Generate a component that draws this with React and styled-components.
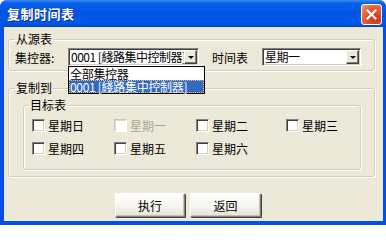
import React from "react";
import styled, { createGlobalStyle } from "styled-components";

const GlobalStyle = createGlobalStyle`
  html, body {
    margin: 0;
    padding: 0;
    background: #ffffff;
  }
  body {
    font-family: "Noto Sans CJK SC", "Liberation Sans", sans-serif;
    font-size: 12px;
  }
`;

const Window = styled.div`
  width: 386px;
  height: 225px;
  display: flex;
  flex-direction: column;
  background: #0450e6;
  border-radius: 7px 7px 0 0;
  overflow: hidden;
  box-sizing: border-box;
`;

const TitleBar = styled.div`
  height: 27px;
  flex: none;
  display: flex;
  align-items: center;
  justify-content: space-between;
  padding: 0 4px 0 7px;
  background: linear-gradient(
    to bottom,
    #3d8bf5 0%,
    #0a5fe8 12%,
    #0054e3 45%,
    #0159ec 85%,
    #0047d0 100%
  );
`;

const Title = styled.span`
  color: #ffffff;
  font-weight: bold;
  font-size: 13px;
  letter-spacing: 0.5px;
  text-shadow: 1px 1px 0 #0a2a8a;
`;

const CloseButton = styled.div`
  width: 19px;
  height: 19px;
  margin-top: 2px;
  border: 1px solid #ffffff;
  border-radius: 3px;
  background: radial-gradient(circle at 70% 75%, #c8371a 0%, #e2613b 60%, #f09a7a 100%);
  display: flex;
  align-items: center;
  justify-content: center;
`;

const Client = styled.div`
  flex: 1;
  margin: 0 3px 4px 4px;
  background: #ece9d8;
  padding: 5px 8px 0 4px;
  display: flex;
  flex-direction: column;
`;

const Group = styled.fieldset`
  margin: ${(p) => p.$top || 0}px 0 0 0;
  padding: ${(p) => p.$pad || "0 6px 4px 6px"};
  border: 1px solid #d0d0bf;
  border-radius: 3px;
  box-shadow: 1px 1px 0 #ffffff, inset 1px 1px 0 #ffffff;
  min-width: 0;
`;

const Legend = styled.legend`
  padding: 0 1px;
  margin-left: ${(p) => p.$shift || 0}px;
  line-height: 14px;
  height: 14px;
  color: #000000;
`;

const SourceRow = styled.div`
  display: flex;
  align-items: center;
  margin-top: 2px;
  height: 18px;
`;

const FieldLabel = styled.span`
  width: ${(p) => p.$w}px;
  flex: none;
  color: #000000;
`;

const ComboWrap = styled.div`
  position: relative;
  width: ${(p) => p.$w}px;
  margin-right: ${(p) => p.$mr || 0}px;
  flex: none;
`;

const Combo = styled.div`
  height: 18px;
  box-sizing: border-box;
  display: flex;
  background: #ffffff;
  border: 1px solid;
  border-color: #808080 #ffffff #ffffff #808080;
  box-shadow: inset 1px 1px 0 #404040, inset -1px -1px 0 #d4d0c8;
`;

const ComboText = styled.span`
  flex: 1;
  padding-left: 2px;
  line-height: 16px;
  white-space: nowrap;
  overflow: hidden;
  letter-spacing: -0.5px;
  color: #000000;
`;

const DropButton = styled.div`
  width: 13px;
  height: 14px;
  margin: 1px 1px 0 0;
  box-sizing: border-box;
  flex: none;
  background: #ece9d8;
  border: 1px solid;
  border-color: #ffffff #404040 #404040 #ffffff;
  box-shadow: inset -1px -1px 0 #808080;
  display: flex;
  align-items: center;
  justify-content: center;
`;

const Arrow = styled.span`
  width: 0;
  height: 0;
  border-left: 3px solid transparent;
  border-right: 3px solid transparent;
  border-top: 3px solid #000000;
  margin-top: 1px;
`;

const DropList = styled.ul`
  position: absolute;
  left: 0;
  top: 18px;
  width: 135px;
  margin: 0;
  padding: 0;
  list-style: none;
  background: #ffffff;
  border: 1px solid #000000;
  z-index: 5;
`;

const DropItem = styled.li`
  height: 13px;
  line-height: 13px;
  padding-left: 1px;
  white-space: nowrap;
  letter-spacing: -0.3px;
  color: ${(p) => (p.$selected ? "#ffffff" : "#000000")};
  background: ${(p) => (p.$selected ? "#316ac5" : "transparent")};
  outline: ${(p) => (p.$selected ? "1px dotted #f0c060" : "none")};
  outline-offset: -1px;
`;

const DayGrid = styled.div`
  display: grid;
  grid-template-columns: 82px 82px 90px auto;
  row-gap: 10px;
  margin-top: 7px;
`;

const Check = styled.label`
  display: flex;
  align-items: center;
  gap: 3px;
  height: 13px;
  line-height: 13px;
  color: ${(p) => (p.$disabled ? "#aca899" : "#000000")};
`;

const Box = styled.span`
  width: 13px;
  height: 13px;
  box-sizing: border-box;
  flex: none;
  background: #ffffff;
  border: 1px solid;
  border-color: ${(p) =>
    p.$disabled ? "#c9c7ba #ffffff #ffffff #c9c7ba" : "#808080 #ffffff #ffffff #808080"};
  box-shadow: ${(p) =>
    p.$disabled
      ? "inset 1px 1px 0 #dcdacd"
      : "inset 1px 1px 0 #404040, inset -1px -1px 0 #d4d0c8"};
`;

const ButtonRow = styled.div`
  display: flex;
  gap: 5px;
  margin-top: 16px;
  padding-left: 107px;
`;

const Button = styled.button`
  width: ${(p) => p.$w || 70}px;
  height: 24px;
  padding: 0;
  font-family: "Noto Sans CJK SC", "Liberation Sans", sans-serif;
  font-size: 12px;
  color: #000000;
  background: linear-gradient(to bottom, #ffffff 0%, #f4f3ee 60%, #e6e3d6 100%);
  border: 1px solid;
  border-color: #ffffff #808080 #808080 #ffffff;
  box-shadow: 1px 1px 0 #404040, inset -1px -1px 0 #c5c2b2;
  border-radius: 1px;
`;

const days = [
  { name: "星期日" },
  { name: "星期一", disabled: true },
  { name: "星期二" },
  { name: "星期三" },
  { name: "星期四" },
  { name: "星期五" },
  { name: "星期六" },
];

function CloseIcon() {
  return (
    <svg width="11" height="11" viewBox="0 0 11 11">
      <path d="M1.5 1.5 L9.5 9.5 M9.5 1.5 L1.5 9.5" stroke="#ffffff" strokeWidth="2" strokeLinecap="square" />
    </svg>
  );
}

export default function App() {
  return (
    <>
      <GlobalStyle />
      <Window>
        <TitleBar>
          <Title>复制时间表</Title>
          <CloseButton>
            <CloseIcon />
          </CloseButton>
        </TitleBar>
        <Client>
          <Group>
            <Legend>从源表</Legend>
            <SourceRow>
              <FieldLabel $w={53}>集控器:</FieldLabel>
              <ComboWrap $w={131} $mr={13}>
                <Combo>
                  <ComboText>0001 [綫路集中控制器]</ComboText>
                  <DropButton>
                    <Arrow />
                  </DropButton>
                </Combo>
                <DropList>
                  <DropItem>全部集控器</DropItem>
                  <DropItem $selected>0001 [綫路集中控制器]</DropItem>
                </DropList>
              </ComboWrap>
              <FieldLabel $w={50}>时间表</FieldLabel>
              <ComboWrap $w={99}>
                <Combo>
                  <ComboText>星期一</ComboText>
                  <DropButton>
                    <Arrow />
                  </DropButton>
                </Combo>
              </ComboWrap>
            </SourceRow>
          </Group>
          <Group $top={10} $pad="0 13px 6px 14px">
            <Legend $shift={-8}>复制到</Legend>
            <Group $top={3} $pad="0 8px 14px 8px">
              <Legend $shift={-3}>目标表</Legend>
              <DayGrid>
                {days.map((d) => (
                  <Check key={d.name} $disabled={d.disabled}>
                    <Box $disabled={d.disabled} />
                    {d.name}
                  </Check>
                ))}
              </DayGrid>
            </Group>
          </Group>
          <ButtonRow>
            <Button>执行</Button>
            <Button $w={71}>返回</Button>
          </ButtonRow>
        </Client>
      </Window>
    </>
  );
}
